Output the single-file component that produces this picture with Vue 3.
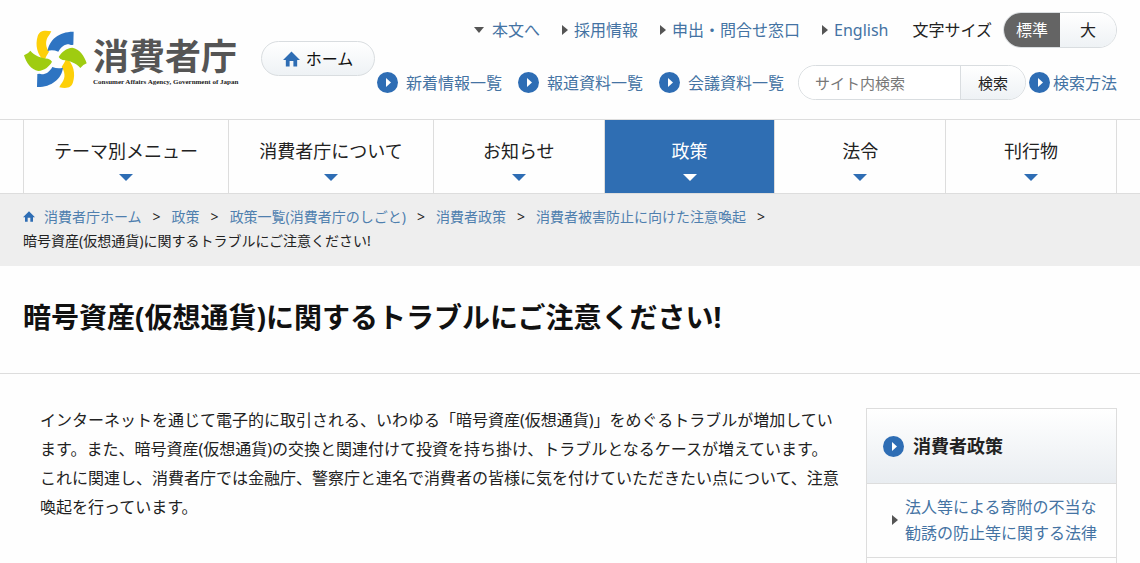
<script setup>
const pageLinks = [
  { label: '本文へ', down: true },
  { label: '採用情報' },
  { label: '申出・問合せ窓口' },
  { label: 'English' },
]
const listLinks = ['新着情報一覧', '報道資料一覧', '会議資料一覧']
const menu = [
  { label: 'テーマ別メニュー' },
  { label: '消費者庁について' },
  { label: 'お知らせ' },
  { label: '政策', current: true },
  { label: '法令' },
  { label: '刊行物' },
]
const crumbs = ['政策', '政策一覧(消費者庁のしごと)', '消費者政策', '消費者被害防止に向けた注意喚起']
const title = '暗号資産(仮想通貨)に関するトラブルにご注意ください!'
</script>

<template>
  <div class="page">
    <header class="header">
      <a class="logo" href="#">
        <svg class="logo-mark" viewBox="20 12 192 180" aria-hidden="true">
          <defs>
            <g id="petals">
              <path fill="#fdd009" d="M64 34C68 18 82 14 105 19Q101 28 96 34C86 48 88 66 98 80Q88 94 84 108C62 90 56 60 64 34Z" />
              <path fill="#9fcc10" d="M23 91Q36 86 42 77C54 92 74 99 95 101Q104 104 107 110C98 126 84 136 66 138C44 134 30 114 23 91Z" />
              <path fill="#2e74c2" d="M94 78C98 44 130 19 172 20L171 59Q162 61 158 58C144 58 134 66 126 80Q108 73 94 78Z" />
            </g>
          </defs>
          <use href="#petals" />
          <use href="#petals" transform="rotate(180 117 103)" />
        </svg>
        <span class="logo-text">
          <span class="logo-name">消費者庁</span>
          <span class="logo-sub">Consumer Affairs Agency, Government of Japan</span>
        </span>
      </a>
      <a class="home" href="#">
        <svg class="home-icon" viewBox="0 0 18 16" aria-hidden="true"><path d="M9 0L18 9H15V16H11V10H7V16H3V9H0Z" /></svg>
        ホーム
      </a>
      <div class="tools">
        <div class="row">
          <a v-for="l in pageLinks" :key="l.label" class="mini" href="#">
            <i class="tri" :class="{ down: l.down }"></i>{{ l.label }}
          </a>
          <span class="size-label">文字サイズ</span>
          <div class="sizes">
            <button type="button" class="size on">標準</button>
            <button type="button" class="size">大</button>
          </div>
        </div>
        <div class="row">
          <a v-for="l in listLinks" :key="l" class="list-link" href="#">
            <svg class="disc" viewBox="0 0 42 42" aria-hidden="true"><circle cx="21" cy="21" r="21" /><path d="M18 12L28 21L18 30Z" /></svg>{{ l }}
          </a>
          <form class="search" @submit.prevent>
            <input type="text" placeholder="サイト内検索" aria-label="サイト内検索" />
            <button type="submit">検索</button>
          </form>
          <a class="list-link how" href="#">
            <svg class="disc" viewBox="0 0 42 42" aria-hidden="true"><circle cx="21" cy="21" r="21" /><path d="M18 12L28 21L18 30Z" /></svg>検索方法
          </a>
        </div>
      </div>
    </header>

    <nav class="nav">
      <ul class="menu">
        <li v-for="m in menu" :key="m.label">
          <a href="#" :class="{ current: m.current }">{{ m.label }}<i class="caret"></i></a>
        </li>
      </ul>
    </nav>

    <div class="crumbs">
      <a href="#"><svg class="crumb-icon" viewBox="0 0 18 16" aria-hidden="true"><path d="M9 0L18 9H15V16H11V10H7V16H3V9H0Z" /></svg>消費者庁ホーム</a>
      <template v-for="c in crumbs" :key="c"><span class="sep">&gt;</span><a href="#">{{ c }}</a></template>
      <span class="sep">&gt;</span>
      <div>{{ title }}</div>
    </div>

    <div class="title">
      <h1>{{ title }}</h1>
    </div>

    <div class="body">
      <main class="text">
        <p>インターネットを通じて電子的に取引される、いわゆる「暗号資産(仮想通貨)」をめぐるトラブルが増加しています。また、暗号資産(仮想通貨)の交換と関連付けて投資を持ち掛け、トラブルとなるケースが増えています。<br />これに関連し、消費者庁では金融庁、警察庁と連名で消費者の皆様に気を付けていただきたい点について、注意喚起を行っています。</p>
      </main>
      <aside class="side">
        <h2>
          <svg class="disc" viewBox="0 0 42 42" aria-hidden="true"><circle cx="21" cy="21" r="21" /><path d="M18 12L28 21L18 30Z" /></svg>消費者政策
        </h2>
        <ul>
          <li><i class="tri"></i><a href="#">法人等による寄附の不当な勧誘の防止等に関する法律</a></li>
        </ul>
      </aside>
    </div>
  </div>
</template>

<style>
body {
  background: #fefefe;
}
</style>

<style scoped>
.page {
  height: 100vh;
  overflow: hidden;
  color: #222;
  font-family: "Noto Sans", "Noto Sans CJK JP", sans-serif;
  font-size: 16px;
  line-height: 24px;
}
a {
  color: #4473a3;
  text-decoration: none;
}
ul {
  margin: 0;
  padding: 0;
  list-style: none;
}
button,
input {
  font: inherit;
  margin: 0;
  border: 0;
  padding: 0;
}
.header {
  display: flex;
  align-items: flex-start;
  padding: 12px 23px 19px;
}
.logo {
  display: flex;
  flex: none;
  width: 214px;
  margin-top: 17px;
  gap: 6px;
}
.logo-mark {
  flex: none;
  width: 64px;
  height: 60px;
}
.logo-text {
  display: flex;
  flex-direction: column;
  white-space: nowrap;
}
.logo-name {
  margin-top: 7px;
  color: #555;
  font-size: 36px;
  font-weight: 700;
  line-height: 41px;
}
.logo-sub {
  color: #222;
  font: 700 7px/10px "Liberation Serif", serif;
}
.home {
  display: flex;
  flex: none;
  align-items: center;
  justify-content: center;
  box-sizing: border-box;
  width: 114px;
  height: 35px;
  margin: 29px 0 0 24px;
  gap: 6px;
  border: 1px solid #d9dde0;
  border-radius: 18px;
  background: linear-gradient(#fff, #eef2f5);
  color: #111;
}
.home-icon {
  width: 17px;
  height: 16px;
  fill: #2e6db4;
}
.tools {
  display: flex;
  flex: 1;
  flex-direction: column;
  gap: 17px;
  white-space: nowrap;
}
.row {
  display: flex;
  align-items: center;
  justify-content: flex-end;
}
.mini {
  display: flex;
  align-items: center;
  margin-right: 22px;
  gap: 6px;
}
.tri {
  flex: none;
  width: 0;
  height: 0;
  border: solid transparent;
  border-width: 5px 0 5px 6px;
  border-left-color: #555;
}
.tri.down {
  margin-right: 2px;
  border-width: 6px 5px 0;
  border-color: #555 transparent transparent;
}
.size-label {
  margin: 0 11px 0 2px;
}
.sizes {
  display: flex;
  overflow: hidden;
  box-sizing: border-box;
  width: 114px;
  height: 36px;
  border: 1px solid #d9dde0;
  border-radius: 18px;
}
.size {
  flex: 1;
  background: linear-gradient(#fff, #eef2f5);
  color: #222;
}
.size.on {
  background: #646464;
  color: #fff;
}
.list-link {
  display: flex;
  align-items: center;
  margin-right: 16px;
  gap: 8px;
}
.disc {
  flex: none;
  width: 21px;
  height: 21px;
  fill: #2e6db4;
}
.disc path {
  fill: #fff;
}
.search {
  display: flex;
  overflow: hidden;
  box-sizing: border-box;
  width: 228px;
  height: 35px;
  margin-left: -2px;
  border: 1px solid #d9dde0;
  border-radius: 18px;
  font-size: 15px;
}
.search input {
  flex: 1;
  min-width: 0;
  padding-left: 16px;
  background: #fff;
}
.search input::placeholder {
  color: #777;
}
.search button {
  width: 65px;
  border-left: 1px solid #d9dde0;
  background: linear-gradient(#fff, #eef2f5);
  color: #222;
}
.how {
  margin: 0 0 0 3px;
  gap: 3px;
}
.nav {
  padding: 0 23px;
  border-top: 1px solid #ddd;
  border-bottom: 1px solid #ddd;
}
.menu {
  display: grid;
  grid-template-columns: 6fr 6fr 5fr 5fr 5fr 5fr;
  border-right: 1px solid #ddd;
}
.menu a {
  display: flex;
  flex-direction: column;
  align-items: center;
  height: 73px;
  box-sizing: border-box;
  padding-top: 19px;
  gap: 11px;
  border-left: 1px solid #ddd;
  color: #222;
  font-size: 18px;
}
.menu a.current {
  background: #2f6eb3;
  background-clip: padding-box;
  color: #fff;
}
.caret {
  border: solid transparent;
  border-width: 7px 7px 0;
  border-top-color: #2e6db4;
}
.current .caret {
  border-top-color: #fff;
}
.crumbs {
  padding: 11px 23px 13px;
  background: #eee;
  font-size: 14px;
}
.crumbs a {
  color: #4f7fae;
}
.crumb-icon {
  width: 12px;
  height: 11px;
  margin-right: 9px;
  fill: #2e6db4;
}
.sep {
  margin: 0 11px;
}
.title {
  padding: 31px 23px 35px;
  border-bottom: 1px solid #ddd;
}
.title h1 {
  margin: 0;
  color: #111;
  font-size: 28px;
  line-height: 41px;
}
.body {
  display: flex;
  padding: 34px 23px 0;
  gap: 20px;
}
.text {
  flex: 1;
  margin-top: -2px;
  padding-left: 17px;
  line-height: 29px;
}
.text p {
  margin: 0;
}
.side {
  flex: none;
  box-sizing: border-box;
  width: 251px;
  padding-bottom: 40px;
  border: 1px solid #ddd;
}
.side h2 {
  display: flex;
  align-items: center;
  height: 74px;
  margin: 0;
  padding-left: 16px;
  gap: 9px;
  background: linear-gradient(#fff, #e9edf1);
  border-bottom: 1px solid #ddd;
  color: #222;
  font-size: 18px;
}
.side li {
  display: flex;
  align-items: center;
  padding: 10px 18px 11px 25px;
  gap: 7px;
  border-bottom: 1px solid #ddd;
  line-height: 26px;
}
</style>
